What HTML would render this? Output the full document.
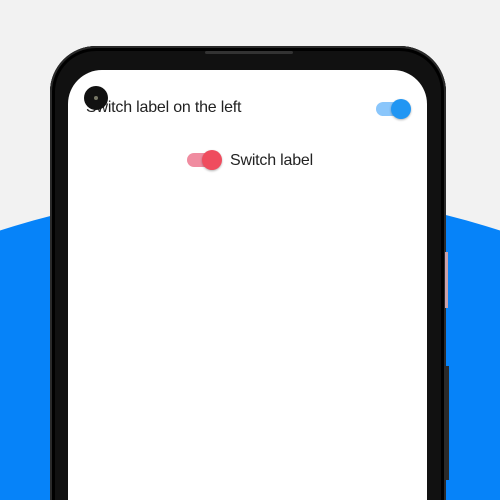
<!DOCTYPE html><html><head><style>
html,body{margin:0;width:500px;height:500px;overflow:hidden}
.w{position:relative;width:500px;height:500px;overflow:hidden;background:#f2f2f2;font-family:"Liberation Sans",sans-serif}
.c{position:absolute;left:-560px;top:191px;width:1620px;height:1620px;border-radius:50%;background:#0683f9}
.ph{position:absolute;left:50px;top:46px;width:396px;height:520px;background:#111;border-radius:46px;box-shadow:inset 0 0 0 2px #2a2a2a,inset 0 0 0 5px #000}
.btn{position:absolute;background:#2a2a2a}
.sc{position:absolute;left:68px;top:70px;width:359px;height:500px;background:#fff;border-radius:34px 34px 0 0}
.cam{position:absolute;left:84px;top:86px;width:24px;height:24px;border-radius:50%;background:#111}
.cam::after{content:"";position:absolute;left:10px;top:10px;width:4px;height:4px;border-radius:50%;background:#776}
.t{position:absolute;font-size:16px;color:#222;letter-spacing:-0.2px}
.tr{position:absolute;height:14px;border-radius:7px}
.th{position:absolute;width:20px;height:20px;border-radius:50%;box-shadow:0 1px 2px rgba(0,0,0,.3)}
</style></head><body><div class="w">
<div class="c"></div>
<div class="ph"></div>
<div class="btn" style="left:445px;top:252px;width:3px;height:56px;background:#c9a0a8"></div>
<div class="btn" style="left:445px;top:366px;width:4px;height:114px"></div>
<div style="position:absolute;left:205px;top:51px;width:88px;height:3px;background:#333;border-radius:2px"></div>
<div class="sc"></div>
<div class="t" style="left:86px;top:99px">Switch label on the left</div>
<div class="cam"></div>
<div class="tr" style="left:376px;top:102px;width:34px;background:#8ac6fb"></div>
<div class="th" style="left:391px;top:99px;background:#2196f3"></div>
<div class="tr" style="left:187px;top:153px;width:34px;background:#f08ca0"></div>
<div class="th" style="left:202px;top:150px;background:#ef4c5e"></div>
<div class="t" style="left:230px;top:152px">Switch label</div>
</div></body></html>
